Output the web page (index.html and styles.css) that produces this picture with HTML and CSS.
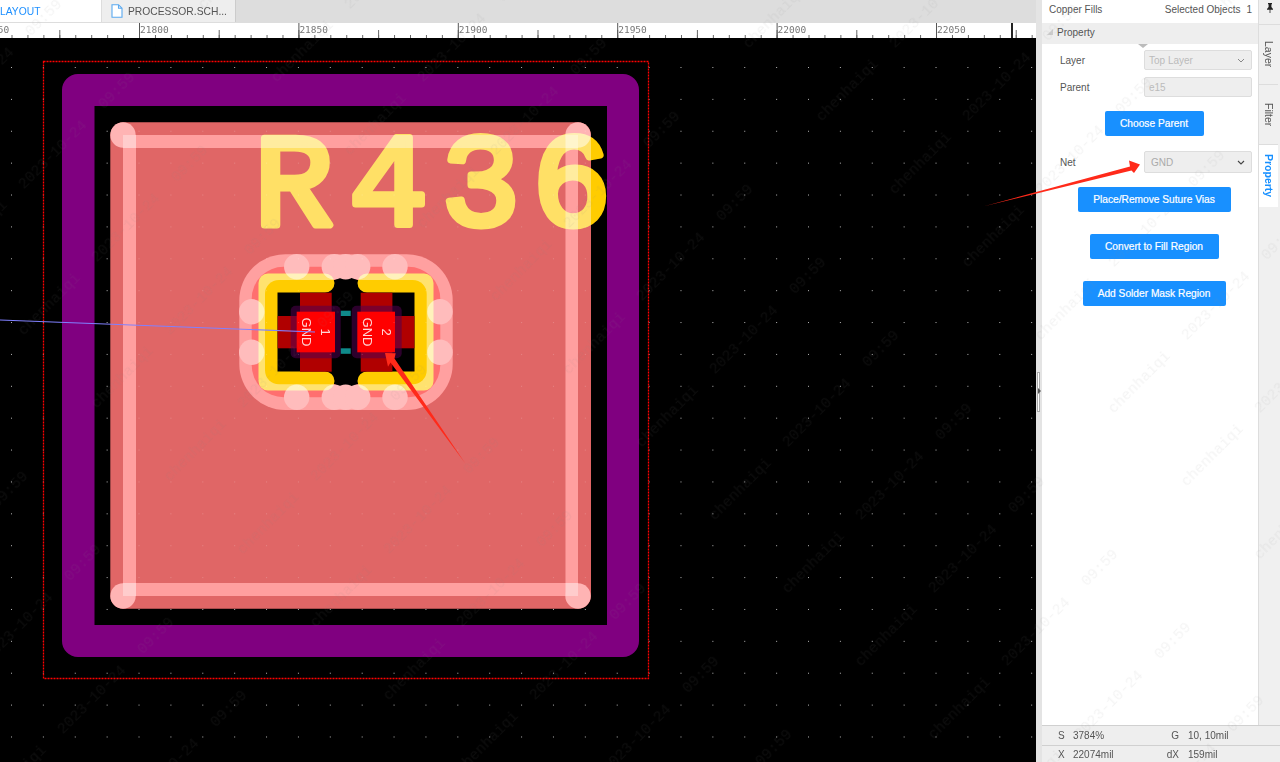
FILE: index.html
```html
<!DOCTYPE html>
<html>
<head>
    <title>PCB Layout</title>
    <link rel="stylesheet" href="styles.css">
</head>
<body>

    <div class="app">

        <!-- editor -->
        <div class="main">
            <div class="tabs">
                <div class="tab tab-active">LAYOUT</div>
                <div class="tab">
                    <svg class="tab-icon" width="12" height="14" viewBox="0 0 12 14">
                        <path d="M1 .7h6.5L11 4.2v9.1H1z M7.5 .7v3.5H11" fill="#fff" stroke="#5aa9f0" stroke-width="1.1"/>
                    </svg>
                    PROCESSOR.SCH...
                </div>
            </div>

            <!-- ruler -->
            <svg class="ruler" width="1036" height="15" viewBox="0 0 1036 15">
                <defs>
                    <pattern id="tickMinor" x="11.5" y="0" width="15.94" height="15" patternUnits="userSpaceOnUse">
                        <rect x="0" y="12" width="1" height="3" fill="#666"/>
                    </pattern>
                    <pattern id="tickMid" x="59.3" y="0" width="79.7" height="15" patternUnits="userSpaceOnUse">
                        <rect x="0" y="7" width="1" height="8" fill="#666"/>
                    </pattern>
                    <pattern id="tickMajor" x="-20.4" y="0" width="159.4" height="15" patternUnits="userSpaceOnUse">
                        <rect x="0" y="0" width="1" height="15" fill="#555"/>
                    </pattern>
                </defs>
                <rect width="1036" height="15" fill="url(#tickMinor)"/>
                <rect width="1036" height="15" fill="url(#tickMid)"/>
                <rect width="1036" height="15" fill="url(#tickMajor)"/>
                <rect x="1011" y="0" width="2" height="15" fill="#222"/>
                <g class="ruler-text">
                    <text x="-19.4" y="10">21750</text>
                    <text x="140" y="10">21800</text>
                    <text x="299.4" y="10">21850</text>
                    <text x="458.8" y="10">21900</text>
                    <text x="618.2" y="10">21950</text>
                    <text x="777.6" y="10">22000</text>
                    <text x="937" y="10">22050</text>
                </g>
            </svg>

            <!-- board -->
            <svg class="board" width="1036" height="724" viewBox="0 38 1036 724">
                <defs>
                    <pattern id="gridDots" x="11" y="67" width="31.88" height="31.88" patternUnits="userSpaceOnUse">
                        <rect x="0" y="0" width="1" height="1" fill="#b5b5b5"/>
                    </pattern>
                    <pattern id="gridDotsFaint" x="11" y="67" width="31.88" height="31.88" patternUnits="userSpaceOnUse">
                        <rect x="0" y="0" width="1" height="1" fill="#fff" fill-opacity=".2"/>
                    </pattern>
                </defs>

                <rect x="0" y="38" width="1036" height="724" fill="#000"/>
                <rect x="0" y="38" width="1036" height="724" fill="url(#gridDots)"/>

                <rect class="bounds" x="43.5" y="61.5" width="605" height="617"/>
                <path fill="#800080" fill-rule="evenodd" d="M78 74H623a16 16 0 0 1 16 16V641a16 16 0 0 1-16 16H78a16 16 0 0 1-16-16V90a16 16 0 0 1 16-16z M94.500 106V625H607V106z"/>
                <rect x="110" y="122" width="481" height="487" fill="#000"/>

                <!-- silkscreen -->
                <text class="silk-text" x="254 349 441 532" y="225">R436</text>
                <path class="silk-line" d="M325 283H268V381H325"/>
                <path class="silk-line" d="M367 283H424V381H367"/>

                <!-- pads -->
                <rect x="300" y="292.7" width="31.7" height="79" fill="#b00000"/>
                <rect x="360.7" y="292.7" width="31.7" height="79" fill="#b00000"/>
                <rect x="277.7" y="316" width="22.3" height="32.3" fill="#b00000"/>
                <rect x="392.4" y="316" width="22" height="32.3" fill="#b00000"/>
                <rect x="340.7" y="310.7" width="10" height="5.3" fill="#0f8a8a"/>
                <rect x="340.7" y="348.3" width="10" height="5.5" fill="#0f8a8a"/>
                <rect class="pad-halo" x="290.7" y="305.7" width="50" height="52.6" rx="5"/>
                <rect class="pad-halo" x="351.7" y="305.7" width="50" height="52.6" rx="5"/>
                <rect x="296.7" y="311.7" width="38.3" height="40.6" fill="#f00"/>
                <rect x="357.3" y="311.7" width="37.7" height="40.6" fill="#f00"/>
                <g class="pad-text">
                    <text transform="translate(306 332) rotate(90)">GND</text>
                    <text transform="translate(325 332) rotate(90)">1</text>
                    <text transform="translate(367 332) rotate(90)">GND</text>
                    <text transform="translate(386 332) rotate(90)">2</text>
                </g>

                <!-- copper fill, black parts leave what is below untouched -->
                <g class="copper">
                    <rect x="110.3" y="122.3" width="480.7" height="486.4" rx="13" fill="#e06666"/>
                    <rect x="123" y="135" width="455" height="13" fill="#ff9f9f"/>
                    <rect x="123" y="583" width="455" height="13" fill="#ff9f9f"/>
                    <rect x="123" y="135" width="13" height="461" fill="#ff9f9f"/>
                    <rect x="565.5" y="135" width="12.5" height="461" fill="#ff9f9f"/>
                    <circle cx="123" cy="135" r="12.7" fill="#ffb4b4"/>
                    <circle cx="578" cy="135" r="12.7" fill="#ffb4b4"/>
                    <circle cx="123" cy="596" r="12.7" fill="#ffb4b4"/>
                    <circle cx="578" cy="596" r="12.7" fill="#ffb4b4"/>
                    <rect x="123" y="135" width="13" height="13" fill="#ffcccc"/>
                    <rect x="565.5" y="135" width="12.5" height="13" fill="#ffcccc"/>
                    <rect x="123" y="583" width="13" height="13" fill="#ffcccc"/>
                    <rect x="565.5" y="583" width="12.5" height="13" fill="#ffcccc"/>

                    <rect x="239.3" y="254.3" width="213.4" height="155.7" rx="46" fill="#ffa0a0"/>
                    <rect x="251.7" y="266.7" width="188.6" height="130.6" rx="32" fill="#ff6f6f"/>
                    <rect x="265" y="280" width="161.7" height="104.3" rx="14" fill="#000"/>
                    <rect x="334" y="276" width="24" height="112" rx="8" fill="#000"/>

                    <g fill="#ffbcbc">
                        <circle cx="296.7" cy="266.7" r="12.7"/>
                        <circle cx="334.3" cy="266.7" r="12.7"/>
                        <circle cx="345.7" cy="266.7" r="12.7"/>
                        <circle cx="357.7" cy="266.7" r="12.7"/>
                        <circle cx="395" cy="266.7" r="12.7"/>
                        <circle cx="296.7" cy="397.3" r="12.7"/>
                        <circle cx="334.3" cy="397.3" r="12.7"/>
                        <circle cx="345.7" cy="397.3" r="12.7"/>
                        <circle cx="357.7" cy="397.3" r="12.7"/>
                        <circle cx="395" cy="397.3" r="12.7"/>
                        <circle cx="251.7" cy="311.7" r="12.7"/>
                        <circle cx="251.7" cy="352.3" r="12.7"/>
                        <circle cx="440" cy="311.7" r="12.7"/>
                        <circle cx="440" cy="352.3" r="12.7"/>
                    </g>
                </g>
                <rect x="110.3" y="122.3" width="480.7" height="486.4" fill="url(#gridDotsFaint)"/>

                <path d="M0 320L315 332" stroke="#8080ff" stroke-width="1.2" fill="none"/>
            </svg>
        </div>

        <!-- right side -->
        <div class="side">
            <div class="gutter"><span class="gutter-handle"></span></div>
            <div class="side-inner">
                <div class="side-top">
                    <div class="panel">
                        <div class="panel-head">
                            <span>Copper Fills</span>
                            <span class="panel-count">Selected Objects<b>1</b></span>
                        </div>
                        <div class="section-head"><i class="section-arrow"></i>Property</div>
                        <i class="section-notch"></i>

                        <div class="form">
                            <div class="row">
                                <label>Layer</label>
                                <div class="field">Top Layer
                                    <svg class="chev" width="8" height="5" viewBox="0 0 8 5"><path d="M1 1l3 3 3-3" fill="none" stroke="#888" stroke-width="1"/></svg>
                                </div>
                            </div>
                            <div class="row">
                                <label>Parent</label>
                                <div class="field">e15</div>
                            </div>
                            <button class="btn btn-parent">Choose Parent</button>
                            <div class="row row-net">
                                <label>Net</label>
                                <div class="field field-net">GND
                                    <svg class="chev" width="8" height="5" viewBox="0 0 8 5"><path d="M1 1l3 3 3-3" fill="none" stroke="#444" stroke-width="1.1"/></svg>
                                </div>
                            </div>
                            <button class="btn btn-vias">Place/Remove Suture Vias</button>
                            <button class="btn btn-fill">Convert to Fill Region</button>
                            <button class="btn btn-mask">Add Solder Mask Region</button>
                        </div>
                    </div>

                    <div class="side-tabs">
                        <div class="pin">
                            <svg width="8" height="10" viewBox="0 0 8 10"><path d="M2 0h4v1l-.6.5V4L7 6v.7H4.4V10h-.8V6.7H1V6l1.6-2V1.500L2 1z" fill="#222"/></svg>
                        </div>
                        <div class="vtab">Layer</div>
                        <div class="vtab">Filter</div>
                        <div class="vtab vtab-active">Property</div>
                    </div>
                </div>

                <div class="status">
                    <div class="status-row">
                        <span class="status-key">S</span><span class="status-val">3784%</span>
                        <span class="status-key2">G</span><span>10, 10mil</span>
                    </div>
                    <div class="status-row">
                        <span class="status-key">X</span><span class="status-val">22074mil</span>
                        <span class="status-key2">dX</span><span>159mil</span>
                    </div>
                </div>
            </div>
        </div>
    </div>

    <!-- watermark and the two marks drawn on top of the screenshot -->
    <svg class="overlay" width="1280" height="762" viewBox="0 0 1280 762">
        <defs>
            <pattern id="watermark" x="100" width="357.8" height="103.24" patternUnits="userSpaceOnUse" patternTransform="rotate(-45)">
                <g class="wm-text">
                    <text x="77.5" y="48">chenhaiqi</text>
                    <text x="185.7" y="48">2023-10-24</text>
                    <text x="276.2" y="48">09:59</text>
                </g>
            </pattern>
        </defs>
        <rect width="1280" height="762" fill="url(#watermark)"/>
        <polygon fill="#ff2a1a" points="985,206 1130,166.500 1129,160.500 1140,164.500 1134,173 1131.500,170.500"/>
        <polygon fill="#ff2a1a" points="465,463 394.500,358.500 395.700,353.300 385,353 388,366.700 390.500,362.500"/>
    </svg>

</body>
</html>
```

FILE: styles.css
```css
html, body { margin: 0; height: 100%; overflow: hidden; }
body { font-family: "Liberation Sans", Arial, sans-serif; font-size: 10px; color: #555; background: #fff; }

.app { display: flex; height: 762px; }

/* editor */
.main { width: 1036px; display: flex; flex-direction: column; overflow: hidden; }
.tabs { display: flex; height: 22px; background: #ddd; border-bottom: 1px solid #ddd; flex: none; }
.tab { display: flex; align-items: center; gap: 5px; width: 134px; box-sizing: border-box; padding-left: 9px; background: #eee; border-right: 1px solid #ccc; font-size: 10.300px; color: #555; }
.tab-icon { flex: none; }
.tab-active { width: 101px; padding-left: 0; margin-right: 1px; background: #fff; border-right: 0; color: #1e90ff; }

.ruler { display: block; flex: none; background: #fff; }
.ruler-text text { font-family: "DejaVu Sans Mono", monospace; font-size: 9.500px; fill: #777; }

.board { display: block; flex: none; }
.bounds { fill: none; stroke: #f00; stroke-width: 1.300; stroke-dasharray: 2 1; }
.silk-text { font-family: "Liberation Mono", monospace; font-size: 132px; fill: #fc0; stroke: #fc0; stroke-width: 7px; stroke-linejoin: round; }
.silk-line { fill: none; stroke: #fc0; stroke-width: 19px; stroke-linejoin: round; stroke-linecap: round; }
.pad-halo { fill: #500050; fill-opacity: .55; }
.pad-text text { font-family: "Liberation Sans", Arial, sans-serif; font-size: 13px; fill: #ffd6d6; text-anchor: middle; dominant-baseline: central; }
.copper { mix-blend-mode: screen; }

/* right side */
.side { width: 244px; display: flex; flex: none; }
.gutter { width: 6px; display: flex; align-items: center; background: #e4e4e4; flex: none; }
.gutter-handle { width: 3px; height: 40px; box-sizing: border-box; margin-left: 1px; margin-top: 22px; background: #fff; border: 1px solid #aaa; position: relative; }
.gutter-handle::after { content: ""; position: absolute; left: 0; top: 15px; border-left: 3px solid #555; border-top: 3px solid transparent; border-bottom: 3px solid transparent; }

.side-inner { flex: 1; display: flex; flex-direction: column; min-width: 0; }
.side-top { flex: 1; display: flex; min-height: 0; }

.panel { width: 217px; box-sizing: border-box; border-right: 1px solid #ddd; background: #fff; position: relative; }
.panel-head { display: flex; justify-content: space-between; height: 23px; align-items: center; box-sizing: border-box; padding: 0 6px 4px 7px; }
.panel-count b { font-weight: normal; margin-left: 6px; }
.section-head { display: flex; align-items: center; height: 21px; box-sizing: border-box; padding: 0 0 3px 5px; background: #eee; }
.section-arrow { width: 0; height: 0; margin-right: 4px; border-bottom: 6px solid #ccc; border-left: 6px solid transparent; }
.section-notch { position: absolute; left: 96px; top: 44px; width: 0; height: 0; border-top: 4px solid #bbb; border-left: 5px solid transparent; border-right: 5px solid transparent; }

.form { display: flex; flex-direction: column; padding: 6px 6px 0 18px; }
.row { display: flex; align-items: center; height: 20px; margin-bottom: 7px; }
.row label { width: 84px; flex: none; }
.field { flex: 1; height: 100%; display: flex; align-items: center; justify-content: space-between; box-sizing: border-box; padding: 0 6px 0 4px; background: #eee; border: 1px solid #ddd; border-radius: 2px; color: #bbb; }
.row-net { height: 22px; margin: 15px 0 14px; }
.field-net { padding-left: 6px; color: #aaa; }

.btn { align-self: center; display: block; height: 25px; padding: 0 0 1px; margin: 0 0 0 -4px; border: 0; border-radius: 2px; background: #1890ff; color: #fff; font-family: inherit; font-size: 10.200px; font-weight: normal; -webkit-text-stroke: .2px #fff; }
.btn-parent { width: 99px; margin-top: 7px; }
.btn-vias { width: 153px; }
.btn-fill { width: 129px; margin-top: 22px; }
.btn-mask { width: 143px; margin-top: 22px; }

.side-tabs { width: 21px; background: #f0f0f0; flex: none; font-size: 10.500px; }
.pin { height: 25px; display: flex; justify-content: center; padding-top: 3px; box-sizing: border-box; border-bottom: 1px solid #ddd; }
.pin svg { display: block; }
.vtab { height: 60px; box-sizing: border-box; writing-mode: vertical-rl; text-align: center; line-height: 19px; border-bottom: 1px solid #ddd; }
.vtab-active { height: 62px; background: #fff; color: #1890ff; border-bottom: 0; font-weight: bold; }

.status { flex: none; background: #eee; color: #555; }
.status-row { display: flex; align-items: center; height: 17px; box-sizing: border-box; border-top: 1px solid #d0d0d0; padding-left: 16px; }
.status-row:first-child { height: 20px; }
.status-key { width: 15px; }
.status-val { width: 80px; }
.status-key2 { width: 35px; box-sizing: border-box; text-align: right; padding-right: 9px; }

/* watermark and marks */
.overlay { position: absolute; left: 0; top: 0; pointer-events: none; }
.wm-text text { font-family: "Liberation Mono", monospace; font-size: 15px; fill: #808080; fill-opacity: .09; text-anchor: middle; }
```
